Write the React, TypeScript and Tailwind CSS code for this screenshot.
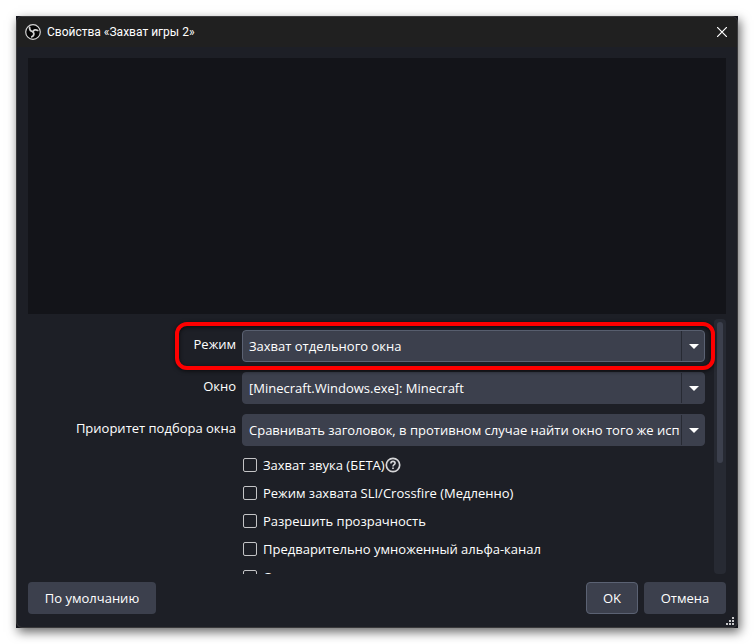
/**
 * Source properties dialog: preview, settings form and footer buttons.
 */
const FIELDS = [
  { id: 'mode', label: 'Режим', value: 'Захват отдельного окна', active: true },
  { id: 'window', label: 'Окно', value: '[Minecraft.Windows.exe]: Minecraft', active: false },
  {
    id: 'priority',
    label: 'Приоритет подбора окна',
    value: 'Сравнивать заголовок, в противном случае найти окно того же исп',
    active: false,
  },
];

const OPTIONS = [
  { id: 'audio', label: 'Захват звука (БЕТА)', help: true },
  { id: 'sli', label: 'Режим захвата SLI/Crossfire (Медленно)', help: false },
  { id: 'transparency', label: 'Разрешить прозрачность', help: false },
  { id: 'premultiplied', label: 'Предварительно умноженный альфа-канал', help: false },
  { id: 'framerate', label: 'Ограничить частоту кадров захвата', help: false },
];

function ObsLogo() {
  return (
    <svg viewBox="0 0 16 16" className="size-4 shrink-0" aria-hidden="true">
      <circle cx="8" cy="8" r="7.3" fill="#050505" stroke="#d4d4d4" strokeWidth="1.2" />
      <g fill="none" stroke="#d0d0d0" strokeWidth="1.8" strokeLinecap="round">
        <path d="M4.6 3.4C4.4 5.8 5.8 7.4 8.2 7.6" />
        <path d="M12.7 6.4C10.8 5.2 8.8 5.8 7.9 7.8" />
        <path d="M6.8 12.8C8.9 11.8 9.5 9.9 8.2 8" />
      </g>
    </svg>
  );
}

function TitleBar() {
  return (
    <header className="flex h-[30px] shrink-0 items-center gap-1.5 bg-[#202020] pr-[7px] pl-2">
      <ObsLogo />
      <h1 className="flex-1 font-[Roboto,sans-serif] text-xs text-white">Свойства «Захват игры 2»</h1>
      <button type="button" aria-label="Закрыть" className="flex size-4 items-center justify-center">
        <svg viewBox="0 0 10 10" className="size-2.5" aria-hidden="true">
          <path d="M0 0L10 10M10 0L0 10" stroke="#fff" strokeWidth="1.2" />
        </svg>
      </button>
    </header>
  );
}

function SelectRow({ id, label, value, active }: (typeof FIELDS)[number]) {
  return (
    <div className="relative grid grid-cols-[208px_1fr] items-start gap-1.5">
      <label htmlFor={id} className="text-right leading-7">
        {label}
      </label>
      <div className="relative">
        <select
          id={id}
          className={`block h-8 w-full appearance-none rounded border bg-[#3c404d] pt-0.5 pr-[22px] pl-1.5 outline-none ${
            active ? 'border-[#5b6273]' : 'border-[#3c404d]'
          }`}
        >
          <option>{value}</option>
        </select>
        <span className="pointer-events-none absolute inset-y-px right-0 flex w-6 items-center justify-center border-l border-[#272a33]">
          <svg viewBox="0 0 10 5" className="h-[5px] w-2.5" aria-hidden="true">
            <path d="M0 0H10L5 5Z" fill="#fff" />
          </svg>
        </span>
      </div>
      {active && (
        <div className="pointer-events-none absolute -inset-y-2 -right-2.5 left-[147px] z-10 rounded-xl border-4 border-[#fe0000] shadow-[0_1px_4px_#000a,inset_0_1px_4px_#000a]" />
      )}
    </div>
  );
}

function OptionRow({ id, label, help }: (typeof OPTIONS)[number]) {
  return (
    <div className="flex h-7 items-center">
      <input
        id={id}
        type="checkbox"
        className="mr-1.5 size-3.5 shrink-0 appearance-none rounded-[2px] border border-[#c4c4c6] checked:bg-[#284cb8]"
      />
      <label htmlFor={id} className="pt-0.5 whitespace-nowrap">
        {label}
      </label>
      {help && (
        <svg viewBox="0 0 16 16" className="size-4 shrink-0" fill="none" stroke="#d6d6d8" aria-hidden="true">
          <circle cx="8" cy="8" r="6.7" strokeWidth="1.7" />
          <path
            d="M5.9 6.4C5.9 5.1 6.8 4.4 8 4.4S10.1 5.1 10.1 6.3C10.1 7.6 8 7.7 8 9.4"
            strokeWidth="1.6"
          />
          <path d="M8 10.4V12" strokeWidth="1.7" />
        </svg>
      )}
    </div>
  );
}

function SizeGrip() {
  return (
    <svg
      viewBox="0 0 8 8"
      className="absolute right-[3px] bottom-0.5 size-2"
      fill="#c8c8ca"
      shapeRendering="crispEdges"
      aria-hidden="true"
    >
      <path d="M6 0h2v2H6zM3 3h2v2H3zM6 3h2v2H6zM0 6h2v2H0zM3 6h2v2H3zM6 6h2v2H6z" />
    </svg>
  );
}

export default function App() {
  return (
    <div className="flex h-screen flex-col bg-white p-4 font-['Open_Sans',sans-serif] text-[13px] text-white">
      <div className="flex min-h-0 flex-1 flex-col bg-[#15161d] shadow-[2px_4px_10px_#0009]">
        <div className="relative flex min-h-0 flex-1 flex-col overflow-hidden rounded-md border border-[#3a3a3c] bg-[#1d1f26]">
          <TitleBar />
          <main className="flex min-h-0 flex-1 flex-col px-[11px] pt-[11px]">
            <div className="h-64 shrink-0 bg-[#131419]" />
            <div className="flex min-h-0 flex-1 gap-[9px] overflow-hidden">
              <form className="flex min-w-0 flex-1 flex-col gap-2.5 pt-4">
                {FIELDS.map((field) => (
                  <SelectRow key={field.id} {...field} />
                ))}
                <div className="-mt-[5px] pl-[215px]">
                  {OPTIONS.map((option) => (
                    <OptionRow key={option.id} {...option} />
                  ))}
                </div>
              </form>
              <div className="mt-[5px] w-3 rounded bg-[#272a33] px-[3px] pt-[3px]">
                <div className="h-[141px] rounded-sm bg-[#3c404d]" />
              </div>
            </div>
          </main>
          <footer className="flex shrink-0 gap-1.5 px-[11px] pt-2 pb-[13px]">
            <button type="button" className="mr-auto h-8 w-32 rounded bg-[#3c404d] pt-0.5">
              По умолчанию
            </button>
            <button type="button" className="h-8 w-[52px] rounded border border-[#5b6273] bg-[#3c404d] pt-0.5">
              OK
            </button>
            <button type="button" className="h-8 w-[82px] rounded bg-[#3c404d] pt-0.5">
              Отмена
            </button>
          </footer>
          <SizeGrip />
        </div>
      </div>
    </div>
  );
}
